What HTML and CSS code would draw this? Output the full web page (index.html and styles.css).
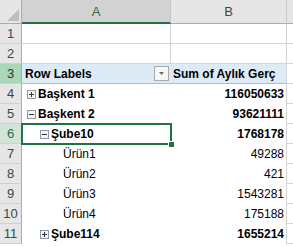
FILE: index.html
```html
<!DOCTYPE html>
<html lang="tr">
<head>
    <meta charset="UTF-8">
    <title>Pivot</title>
    <link rel="stylesheet" href="styles.css">
</head>
<body>
    <div class="sheet">
        <!-- başlık satırı -->
        <div class="corner"><span class="tri"></span></div>
        <div class="ch ch-sel">A</div>
        <div class="ch">B</div>
        <div class="ch ch-last"></div>

        <div class="rh">1</div><div class="c grid"></div><div class="c grid"></div><div class="c gc"></div>
        <div class="rh">2</div><div class="c grid"></div><div class="c grid"></div><div class="c gc"></div>

        <div class="rh rh-3">3</div>
        <div class="c ph pa">
            <span>Row Labels</span>
            <span class="dd"><svg width="15" height="15" viewBox="0 0 15 15"><rect x="0.5" y="0.5" width="14" height="14" fill="#f7f7f7" stroke="#a9a9a9"/><path d="M5 6h5l-2.5 3z" fill="#6b6b6b"/></svg></span>
        </div>
        <div class="c ph pb"><span>Sum of Aylık Gerç</span></div>
        <div class="c gc"></div>

        <div class="rh">4</div>
        <div class="c lv1 b"><svg class="tog" width="9" height="9" viewBox="0 0 9 9"><rect x="0.5" y="0.5" width="8" height="8" fill="#f2f4f7" stroke="#8f98a6"/><path d="M2 4.5h5M4.5 2v5" stroke="#333"/></svg>Başkent 1</div>
        <div class="c num b">116050633</div>
        <div class="c gc"></div>

        <div class="rh">5</div>
        <div class="c lv1 b"><svg class="tog" width="9" height="9" viewBox="0 0 9 9"><rect x="0.5" y="0.5" width="8" height="8" fill="#f2f4f7" stroke="#8f98a6"/><path d="M2 4.5h5" stroke="#333"/></svg>Başkent 2</div>
        <div class="c num b">93621111</div>
        <div class="c gc"></div>

        <div class="rh rh-sel">6</div>
        <div class="c lv2 b sel"><svg class="tog" width="9" height="9" viewBox="0 0 9 9"><rect x="0.5" y="0.5" width="8" height="8" fill="#f2f4f7" stroke="#8f98a6"/><path d="M2 4.5h5" stroke="#333"/></svg>Şube10</div>
        <div class="c num b">1768178</div>
        <div class="c gc"></div>

        <div class="rh">7</div><div class="c lv3">Ürün1</div><div class="c num">49288</div><div class="c gc"></div>
        <div class="rh">8</div><div class="c lv3">Ürün2</div><div class="c num">421</div><div class="c gc"></div>
        <div class="rh">9</div><div class="c lv3">Ürün3</div><div class="c num">1543281</div><div class="c gc"></div>
        <div class="rh">10</div><div class="c lv3">Ürün4</div><div class="c num">175188</div><div class="c gc"></div>

        <div class="rh">11</div>
        <div class="c lv2 b"><svg class="tog" width="9" height="9" viewBox="0 0 9 9"><rect x="0.5" y="0.5" width="8" height="8" fill="#f2f4f7" stroke="#8f98a6"/><path d="M2 4.5h5M4.5 2v5" stroke="#333"/></svg>Şube114</div>
        <div class="c num b">1655214</div>
        <div class="c gc"></div>
    </div>
</body>
</html>
```

FILE: styles.css
```css
body, html {
    margin: 0;
    padding: 0;
    background: #fff;
    overflow: hidden;
    font-family: "Liberation Sans", Arial, sans-serif;
    font-size: 12px;
    color: #000;
}
.sheet {
    display: grid;
    grid-template-columns: 22px 149px 116px 1fr;
    grid-template-rows: 24px;
    grid-auto-rows: 20px;
    width: 293px;
}
.corner {
    background: #e6e6e6;
    border-right: 1px solid #ababab;
    border-bottom: 1px solid #ababab;
    box-sizing: border-box;
    display: flex;
    justify-content: flex-end;
    align-items: flex-end;
    padding: 0 2px 2px 0;
}
.tri {
    width: 0;
    height: 0;
    border-left: 12px solid transparent;
    border-bottom: 12px solid #bdbdbd;
}
.ch {
    background: #e6e6e6;
    border-right: 1px solid #c6c6c6;
    border-bottom: 1px solid #ababab;
    box-sizing: border-box;
    text-align: center;
    font-size: 13px;
    line-height: 24px;
    color: #444;
}
.ch-sel {
    background: #d2d2d2;
    color: #217346;
    border-bottom: 2px solid #217346;
}
.ch-last {
    border-right: none;
}
.rh {
    background: #e6e6e6;
    border-right: 1px solid #ababab;
    border-bottom: 1px solid #cfcfcf;
    box-sizing: border-box;
    text-align: center;
    font-size: 13px;
    line-height: 20px;
    color: #444;
}
.rh-3 {
    background: #a9d8b8;
    color: #333;
}
.rh-sel {
    background: #d3e3d8;
    color: #217346;
}
.c {
    box-sizing: border-box;
    display: flex;
    align-items: center;
    white-space: nowrap;
    overflow: hidden;
}
.grid {
    border-right: 1px solid #d4d4d4;
    border-bottom: 1px solid #d4d4d4;
}
.gc {
    border-bottom: 1px solid #d4d4d4;
}
.b {
    font-weight: bold;
}

/* pivot başlığı */
.ph {
    background: #ddebf7;
    border-bottom: 1px solid #9bc2e6;
    font-weight: bold;
}
.pa {
    padding: 0 2px 0 3px;
}
.pb {
    padding-left: 2px;
    border-right: 1px solid #d4d4d4;
}
.dd {
    margin-left: auto;
    display: flex;
}
.num {
    justify-content: flex-end;
    padding-right: 2px;
    border-right: 1px solid #d4d4d4;
}
.tog {
    flex: none;
    margin-right: 2px;
}
.lv1 {
    padding-left: 5px;
}
.lv2 {
    padding-left: 18px;
}
.lv3 {
    padding-left: 41px;
}

/* seçili hücre */
.sel {
    position: relative;
    overflow: visible;
    z-index: 2;
}
.sel::after {
    content: "";
    position: absolute;
    top: -1px;
    left: -1px;
    right: -1px;
    bottom: -1px;
    border: 2px solid #217346;
}
.sel::before {
    content: "";
    position: absolute;
    right: -4px;
    bottom: -4px;
    width: 5px;
    height: 5px;
    background: #217346;
    border: 1px solid #fff;
    z-index: 3;
}
```
